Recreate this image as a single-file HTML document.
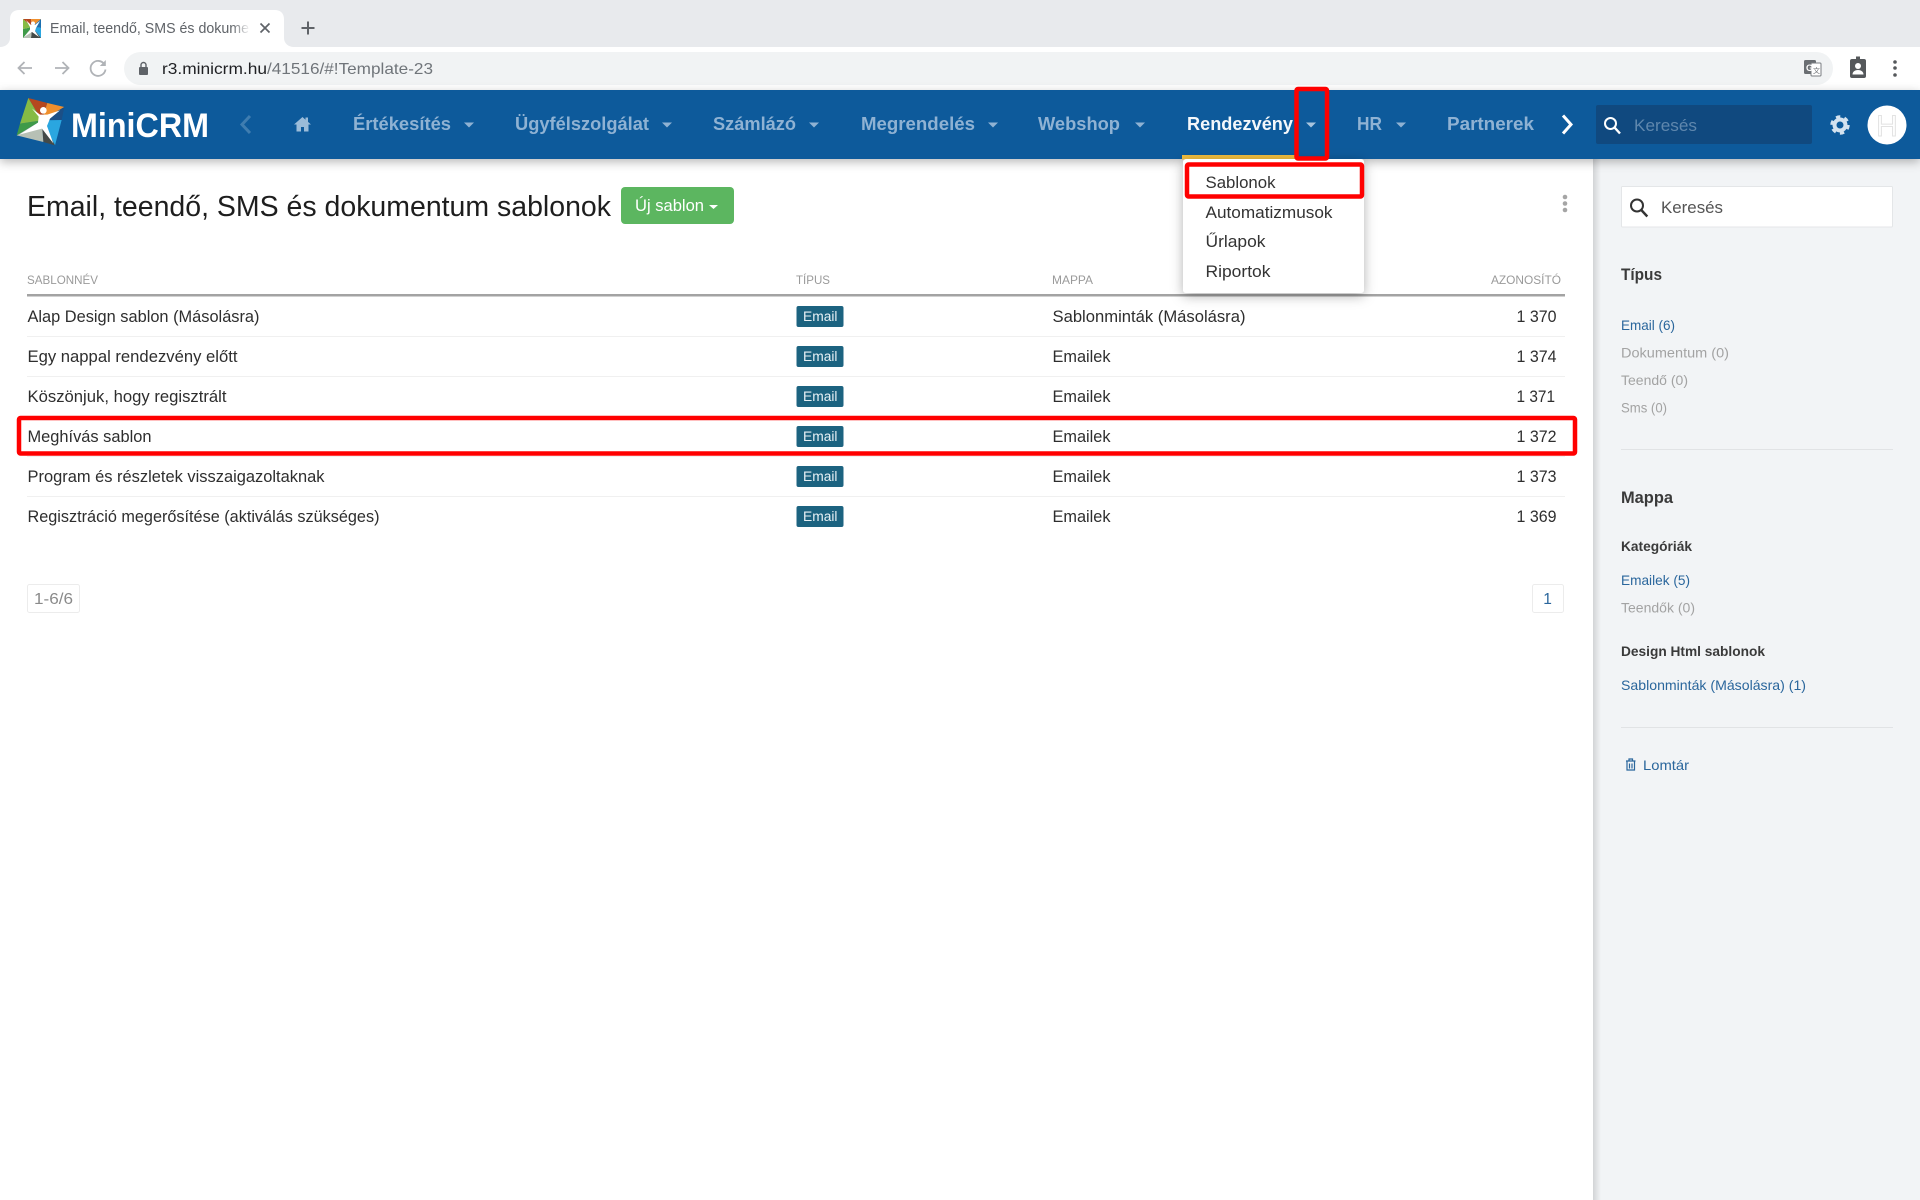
<!DOCTYPE html>
<html lang="hu"><head><meta charset="utf-8"><title>MiniCRM</title>
<style>
html,body{margin:0;padding:0;width:1920px;height:1200px;overflow:hidden;background:#fff}
svg{display:block}
text{font-family:"Liberation Sans",sans-serif}
.nav{font-size:18.5px;font-weight:bold;fill:#8fb2d3}
.row{font-size:16.5px;fill:#2e2e2e}
.th{font-size:11.5px;fill:#9a9a9a}
.bd{font-size:13.5px;fill:#e8f1f5}
.dd{font-size:16.5px;fill:#333}
.sl{font-size:14px;fill:#2a669c}
.sg{font-size:14px;fill:#a3a3a3}
.sb{font-size:14px;font-weight:bold;fill:#3a3a3a}
.sh{font-size:16.5px;font-weight:bold;fill:#3a3a3a}
</style></head><body>
<svg width="1920" height="1200" viewBox="0 0 1920 1200" xmlns="http://www.w3.org/2000/svg">
<defs>
<filter id="hs" x="-5%" y="-50%" width="110%" height="200%"><feDropShadow dx="0" dy="3" stdDeviation="5" flood-color="#000" flood-opacity=".28"/></filter>
<filter id="ds" x="-20%" y="-20%" width="140%" height="140%"><feDropShadow dx="0" dy="3" stdDeviation="6" flood-color="#000" flood-opacity=".3"/></filter>
<linearGradient id="sd" x1="0" x2="1" y1="0" y2="0"><stop offset="0" stop-color="#d2d4d6"/><stop offset="1" stop-color="#f2f4f6"/></linearGradient>
<linearGradient id="fd" x1="0" x2="1" y1="0" y2="0"><stop offset="0" stop-color="#fff" stop-opacity="0"/><stop offset="1" stop-color="#fff"/></linearGradient>
</defs>

<!-- main -->
<rect width="1920" height="1200" fill="#fff"/>

<!-- sidebar -->
<rect x="1594" y="159" width="326" height="1041" fill="#f2f4f6"/>
<rect x="1593" y="159" width="8" height="1041" fill="url(#sd)"/>

<!-- chrome -->
<rect width="1920" height="47" fill="#e8eaed"/>
<rect y="47" width="1920" height="43" fill="#fff"/>
<path d="M0 47C6 47 10 43 10 38V19C10 13 14 10 19 10H275C280 10 284 13 284 19V38C284 43 288 47 294 47Z" fill="#fff"/>
<!-- favicon -->
<g>
<rect x="23" y="19" width="18" height="19" fill="#fff"/>
<polygon points="23,19 31,19 32,27" fill="#b5471f"/>
<polygon points="31,19 41,19 32,27" fill="#ef8f2d"/>
<polygon points="41,19 41,28 32,27" fill="#1c6fb0"/>
<polygon points="41,28 41,38 32,27" fill="#2aa6e0"/>
<polygon points="41,38 31,38 32,27" fill="#444a48"/>
<polygon points="31,38 23,38 32,27" fill="#b7c0b5"/>
<polygon points="23,38 23,29 32,27" fill="#3f9a48"/>
<polygon points="23,29 23,19 32,27" fill="#86bb45"/>
<circle cx="33" cy="23.500" r="2" fill="#fff"/>
<polygon points="26,20 31,25 35,25 40,21 36,28 35,31 39,37 32,32 24,37 30,30 30,27" fill="#fff"/>
</g>
<text x="50" y="33" font-size="14.500" fill="#5f6368" textLength="199" lengthAdjust="spacingAndGlyphs">Email, teendő, SMS és dokume</text>
<rect x="232" y="16" width="18" height="26" fill="url(#fd)"/>
<path d="M260.500 23.500l9 9m0-9l-9 9" stroke="#5f6368" stroke-width="1.700" fill="none"/>
<path d="M308 21.500v13M301.500 28h13" stroke="#5f6368" stroke-width="2" fill="none"/>
<path d="M32 68H18.500m6-6l-6 6 6 6" stroke="#b0b3b7" stroke-width="1.800" fill="none"/>
<path d="M55 68h13.500m-6-6l6 6-6 6" stroke="#b0b3b7" stroke-width="1.800" fill="none"/>
<path d="M104.500 64.500A7.500 7.500 0 1 0 105.500 69.500" stroke="#b0b3b7" stroke-width="1.800" fill="none"/><path d="M105.800 60v6h-6z" fill="#b0b3b7"/>
<rect x="124" y="52" width="1709" height="33" rx="16.500" fill="#f1f3f4"/>
<rect x="139" y="67" width="9" height="8" rx="1" fill="#5f6368"/><path d="M141 67v-2a2.500 2.500 0 0 1 5 0v2" stroke="#5f6368" stroke-width="1.400" fill="none"/>
<text x="162" y="74" font-size="16" fill="#202124" textLength="105" lengthAdjust="spacingAndGlyphs">r3.minicrm.hu</text>
<text x="267" y="74" font-size="16" fill="#70757a" textLength="166" lengthAdjust="spacingAndGlyphs">/41516/#!Template-23</text>
<rect x="1804" y="60" width="12" height="14" rx="1.500" fill="#6a6e72"/><rect x="1811" y="63" width="10" height="13" rx="1" fill="#fff" stroke="#7a7e82"/>
<text x="1806" y="71" font-size="9" font-weight="bold" fill="#fff">G</text><text x="1813" y="73" font-size="7" fill="#6a6e72" style="font-family:'Liberation Sans','Noto Sans CJK SC',sans-serif">文</text>
<rect x="1850" y="59" width="16" height="19" rx="2" fill="#55585b"/><rect x="1856" y="56.500" width="4" height="5" fill="#55585b"/><circle cx="1858" cy="66" r="3" fill="#fff"/><path d="M1852.500 74.500c0-6 11-6 11 0z" fill="#fff"/>
<circle cx="1895" cy="62" r="1.800" fill="#55585b"/><circle cx="1895" cy="68" r="1.800" fill="#55585b"/><circle cx="1895" cy="75" r="1.800" fill="#55585b"/>

<!-- nav bar -->
<rect y="90" width="1920" height="69" fill="#0a5a9b" filter="url(#hs)"/>
<!-- logo -->
<g transform="translate(10,92) scale(.3333)">
<polygon points="55,18 112,33 95,85" fill="#b5471f"/>
<polygon points="112,33 163,45 95,85" fill="#ef8f2d"/>
<polygon points="163,45 155,84 95,85" fill="#1c4f86"/>
<polygon points="155,84 135,160 95,85" fill="#2aa6e0"/>
<polygon points="135,160 100,150 95,85" fill="#444a48"/>
<polygon points="100,150 20,130 95,85" fill="#b7c0b5"/>
<polygon points="20,130 30,95 95,85" fill="#3f9a48"/>
<polygon points="30,95 55,18 95,85" fill="#86bb45"/>
<circle cx="100" cy="55" r="10" fill="#fff"/>
<polygon points="66,50 90,68 112,68 150,55 120,80 111,102 130,154 96,110 28,128 84,92 86,74" fill="#fff"/>
</g>
<text x="71" y="137" font-size="34" font-weight="bold" fill="#fff" textLength="138" lengthAdjust="spacingAndGlyphs">MiniCRM</text>
<path d="M250 116l-8 8.500 8 8.500" stroke="#3f7db0" stroke-width="3" fill="none"/>
<path d="M302.500 117l-8.500 7.500h2.500v7h4.500v-4.500h3v4.500h4.500v-7h2.500l-3-2.600v-4.400h-2.500v2.200z" fill="#9bbcd9"/>
<text class="nav" x="353" y="130" textLength="98" lengthAdjust="spacingAndGlyphs">Értékesítés</text><path d="M464 122.500h10l-5 5z" fill="#8fb2d3"/>
<text class="nav" x="515" y="130" textLength="134" lengthAdjust="spacingAndGlyphs">Ügyfélszolgálat</text><path d="M662 122.500h10l-5 5z" fill="#8fb2d3"/>
<text class="nav" x="713" y="130" textLength="83" lengthAdjust="spacingAndGlyphs">Számlázó</text><path d="M809 122.500h10l-5 5z" fill="#8fb2d3"/>
<text class="nav" x="861" y="130" textLength="114" lengthAdjust="spacingAndGlyphs">Megrendelés</text><path d="M988 122.500h10l-5 5z" fill="#8fb2d3"/>
<text class="nav" x="1038" y="130" textLength="82" lengthAdjust="spacingAndGlyphs">Webshop</text><path d="M1135 122.500h10l-5 5z" fill="#8fb2d3"/>
<text class="nav" x="1187" y="130" style="fill:#f4f8fb" textLength="106" lengthAdjust="spacingAndGlyphs">Rendezvény</text><path d="M1306 122.500h10l-5 5z" fill="#a9c5de"/>
<text class="nav" x="1357" y="130" textLength="25" lengthAdjust="spacingAndGlyphs">HR</text><path d="M1396 122.500h10l-5 5z" fill="#8fb2d3"/>
<text class="nav" x="1447" y="130" textLength="87" lengthAdjust="spacingAndGlyphs">Partnerek</text>
<path d="M1563 115.500l8 9-8 9" stroke="#fff" stroke-width="3" fill="none"/>
<rect x="1596" y="105" width="216" height="39" rx="2" fill="#10497f"/>
<circle cx="1610.500" cy="123.500" r="5.500" stroke="#fff" stroke-width="2" fill="none"/><path d="M1614.500 127.500l5.500 6" stroke="#fff" stroke-width="2.400"/>
<text x="1634" y="131" font-size="17" fill="#5f87ad" textLength="63" lengthAdjust="spacingAndGlyphs">Keresés</text>
<circle cx="1840" cy="125" r="5.500" fill="none" stroke="#d3e2ef" stroke-width="4"/>
<circle cx="1840" cy="125" r="8.200" fill="none" stroke="#d3e2ef" stroke-width="3" stroke-dasharray="4.300 4.290"/>
<circle cx="1887" cy="125" r="19.500" fill="#fff"/>
<text x="1887" y="136" font-size="30" text-anchor="middle" fill="#fff" stroke="#e2e2e2" stroke-width="1">H</text>

<rect x="1182" y="155" width="114" height="4.500" fill="#efbc3e"/>

<!-- page head -->
<text x="27" y="216" font-size="29" fill="#1e1e1e" textLength="584" lengthAdjust="spacingAndGlyphs">Email, teendő, SMS és dokumentum sablonok</text>
<rect x="621" y="187" width="113" height="37" rx="4" fill="#5cb660"/>
<text x="635" y="211" font-size="16.500" fill="#fff" textLength="69" lengthAdjust="spacingAndGlyphs">Új sablon</text>
<path d="M709 205h9l-4.500 4z" fill="#fff"/>
<circle cx="1565" cy="197" r="2.300" fill="#a5a5a5"/><circle cx="1565" cy="203.500" r="2.300" fill="#a5a5a5"/><circle cx="1565" cy="210" r="2.300" fill="#a5a5a5"/>

<!-- table -->
<text class="th" x="27" y="284" textLength="71" lengthAdjust="spacingAndGlyphs">SABLONNÉV</text>
<text class="th" x="796" y="284" textLength="34" lengthAdjust="spacingAndGlyphs">TÍPUS</text>
<text class="th" x="1052" y="284" textLength="41" lengthAdjust="spacingAndGlyphs">MAPPA</text>
<text class="th" x="1491" y="284" textLength="70" lengthAdjust="spacingAndGlyphs">AZONOSÍTÓ</text>
<rect x="27" y="294" width="1538" height="2.500" fill="#a3a3a3"/>
<g fill="#f0f0f0"><rect x="27" y="336" width="1538" height="1"/><rect x="27" y="376" width="1538" height="1"/><rect x="27" y="416" width="1538" height="1"/><rect x="27" y="456" width="1538" height="1"/><rect x="27" y="496" width="1538" height="1"/></g>

<text class="row" x="27.500" y="322" textLength="232" lengthAdjust="spacingAndGlyphs">Alap Design sablon (Másolásra)</text>
<text class="row" x="27.500" y="362" textLength="210" lengthAdjust="spacingAndGlyphs">Egy nappal rendezvény előtt</text>
<text class="row" x="27.500" y="402" textLength="199" lengthAdjust="spacingAndGlyphs">Köszönjuk, hogy regisztrált</text>
<text class="row" x="27.500" y="442" textLength="124" lengthAdjust="spacingAndGlyphs">Meghívás sablon</text>
<text class="row" x="27.500" y="482" textLength="297" lengthAdjust="spacingAndGlyphs">Program és részletek visszaigazoltaknak</text>
<text class="row" x="27.500" y="522" textLength="352" lengthAdjust="spacingAndGlyphs">Regisztráció megerősítése (aktiválás szükséges)</text>

<g fill="#1c6380">
<rect x="796.500" y="306" width="47" height="21" rx="2"/><rect x="796.500" y="346" width="47" height="21" rx="2"/><rect x="796.500" y="386" width="47" height="21" rx="2"/><rect x="796.500" y="426" width="47" height="21" rx="2"/><rect x="796.500" y="466" width="47" height="21" rx="2"/><rect x="796.500" y="506" width="47" height="21" rx="2"/>
</g>
<text class="bd" x="803" y="321" textLength="34.500" lengthAdjust="spacingAndGlyphs">Email</text>
<text class="bd" x="803" y="361" textLength="34.500" lengthAdjust="spacingAndGlyphs">Email</text>
<text class="bd" x="803" y="401" textLength="34.500" lengthAdjust="spacingAndGlyphs">Email</text>
<text class="bd" x="803" y="441" textLength="34.500" lengthAdjust="spacingAndGlyphs">Email</text>
<text class="bd" x="803" y="481" textLength="34.500" lengthAdjust="spacingAndGlyphs">Email</text>
<text class="bd" x="803" y="521" textLength="34.500" lengthAdjust="spacingAndGlyphs">Email</text>

<text class="row" x="1052.500" y="322" textLength="193" lengthAdjust="spacingAndGlyphs">Sablonminták (Másolásra)</text>
<text class="row" x="1052.500" y="362" textLength="58" lengthAdjust="spacingAndGlyphs">Emailek</text>
<text class="row" x="1052.500" y="402" textLength="58" lengthAdjust="spacingAndGlyphs">Emailek</text>
<text class="row" x="1052.500" y="442" textLength="58" lengthAdjust="spacingAndGlyphs">Emailek</text>
<text class="row" x="1052.500" y="482" textLength="58" lengthAdjust="spacingAndGlyphs">Emailek</text>
<text class="row" x="1052.500" y="522" textLength="58" lengthAdjust="spacingAndGlyphs">Emailek</text>

<text class="row" x="1516.500" y="322" textLength="40" lengthAdjust="spacingAndGlyphs">1 370</text>
<text class="row" x="1516.500" y="362" textLength="40" lengthAdjust="spacingAndGlyphs">1 374</text>
<text class="row" x="1516.500" y="402" textLength="38.500" lengthAdjust="spacingAndGlyphs">1 371</text>
<text class="row" x="1516.500" y="442" textLength="40" lengthAdjust="spacingAndGlyphs">1 372</text>
<text class="row" x="1516.500" y="482" textLength="40" lengthAdjust="spacingAndGlyphs">1 373</text>
<text class="row" x="1516.500" y="522" textLength="40" lengthAdjust="spacingAndGlyphs">1 369</text>

<rect x="19" y="418" width="1556" height="35.500" rx="1.500" fill="none" stroke="#f00" stroke-width="4.500"/>

<!-- pagination -->
<rect x="27.500" y="584.500" width="52" height="28" rx="2" fill="#fff" stroke="#ececec"/>
<text x="34" y="604" font-size="15.500" fill="#8a8a8a" textLength="39" lengthAdjust="spacingAndGlyphs">1-6/6</text>
<rect x="1532.500" y="584.500" width="31" height="28" rx="2" fill="#fff" stroke="#ececec"/>
<text x="1547.500" y="604" font-size="15.500" text-anchor="middle" fill="#2a669c">1</text>

<!-- dropdown -->
<rect x="1183" y="159" width="181" height="134" rx="3" fill="#fff" filter="url(#ds)"/>
<text class="dd" x="1205.500" y="188" textLength="70" lengthAdjust="spacingAndGlyphs">Sablonok</text>
<text class="dd" x="1205.500" y="218" textLength="127" lengthAdjust="spacingAndGlyphs">Automatizmusok</text>
<text class="dd" x="1205.500" y="247" textLength="60" lengthAdjust="spacingAndGlyphs">Űrlapok</text>
<text class="dd" x="1205.500" y="277" textLength="65" lengthAdjust="spacingAndGlyphs">Riportok</text>
<rect x="1187" y="164.500" width="175" height="32" rx="1.500" fill="none" stroke="#f00" stroke-width="4.500"/>
<rect x="1296.500" y="89" width="30.500" height="69.500" rx="1.500" fill="none" stroke="#f00" stroke-width="4.500"/>

<!-- sidebar content -->
<rect x="1621.500" y="186.500" width="271" height="40.500" rx="1" fill="#fff" stroke="#e4e6e8"/>
<circle cx="1637" cy="205.500" r="6" stroke="#333" stroke-width="2" fill="none"/><path d="M1641.300 210l6 6.500" stroke="#333" stroke-width="2.400"/>
<text x="1661" y="213" font-size="17" fill="#555" textLength="62" lengthAdjust="spacingAndGlyphs">Keresés</text>
<text class="sh" x="1621" y="280" textLength="41" lengthAdjust="spacingAndGlyphs">Típus</text>
<text class="sl" x="1621" y="330" textLength="54" lengthAdjust="spacingAndGlyphs">Email (6)</text>
<text class="sg" x="1621" y="357.500" textLength="108" lengthAdjust="spacingAndGlyphs">Dokumentum (0)</text>
<text class="sg" x="1621" y="385" textLength="67" lengthAdjust="spacingAndGlyphs">Teendő (0)</text>
<text class="sg" x="1621" y="412.500" textLength="46" lengthAdjust="spacingAndGlyphs">Sms (0)</text>
<rect x="1621" y="449" width="272" height="1" fill="#e1e3e5"/>
<text class="sh" x="1621" y="503" textLength="52" lengthAdjust="spacingAndGlyphs">Mappa</text>
<text class="sb" x="1621" y="551" textLength="71" lengthAdjust="spacingAndGlyphs">Kategóriák</text>
<text class="sl" x="1621" y="585" textLength="69" lengthAdjust="spacingAndGlyphs">Emailek (5)</text>
<text class="sg" x="1621" y="612.500" textLength="74" lengthAdjust="spacingAndGlyphs">Teendők (0)</text>
<text class="sb" x="1621" y="656" textLength="144" lengthAdjust="spacingAndGlyphs">Design Html sablonok</text>
<text class="sl" x="1621" y="690" textLength="185" lengthAdjust="spacingAndGlyphs">Sablonminták (Másolásra) (1)</text>
<rect x="1621" y="727" width="272" height="1" fill="#e1e3e5"/>
<path d="M1626 761h9.500M1629 761v-2h3.500v2M1627 761.500v8.500h7.500v-8.500M1629.500 763.500v5M1632 763.500v5" stroke="#2a669c" stroke-width="1.200" fill="none"/>
<text class="sl" x="1643" y="770" textLength="46" lengthAdjust="spacingAndGlyphs">Lomtár</text>
</svg>
</body></html>
